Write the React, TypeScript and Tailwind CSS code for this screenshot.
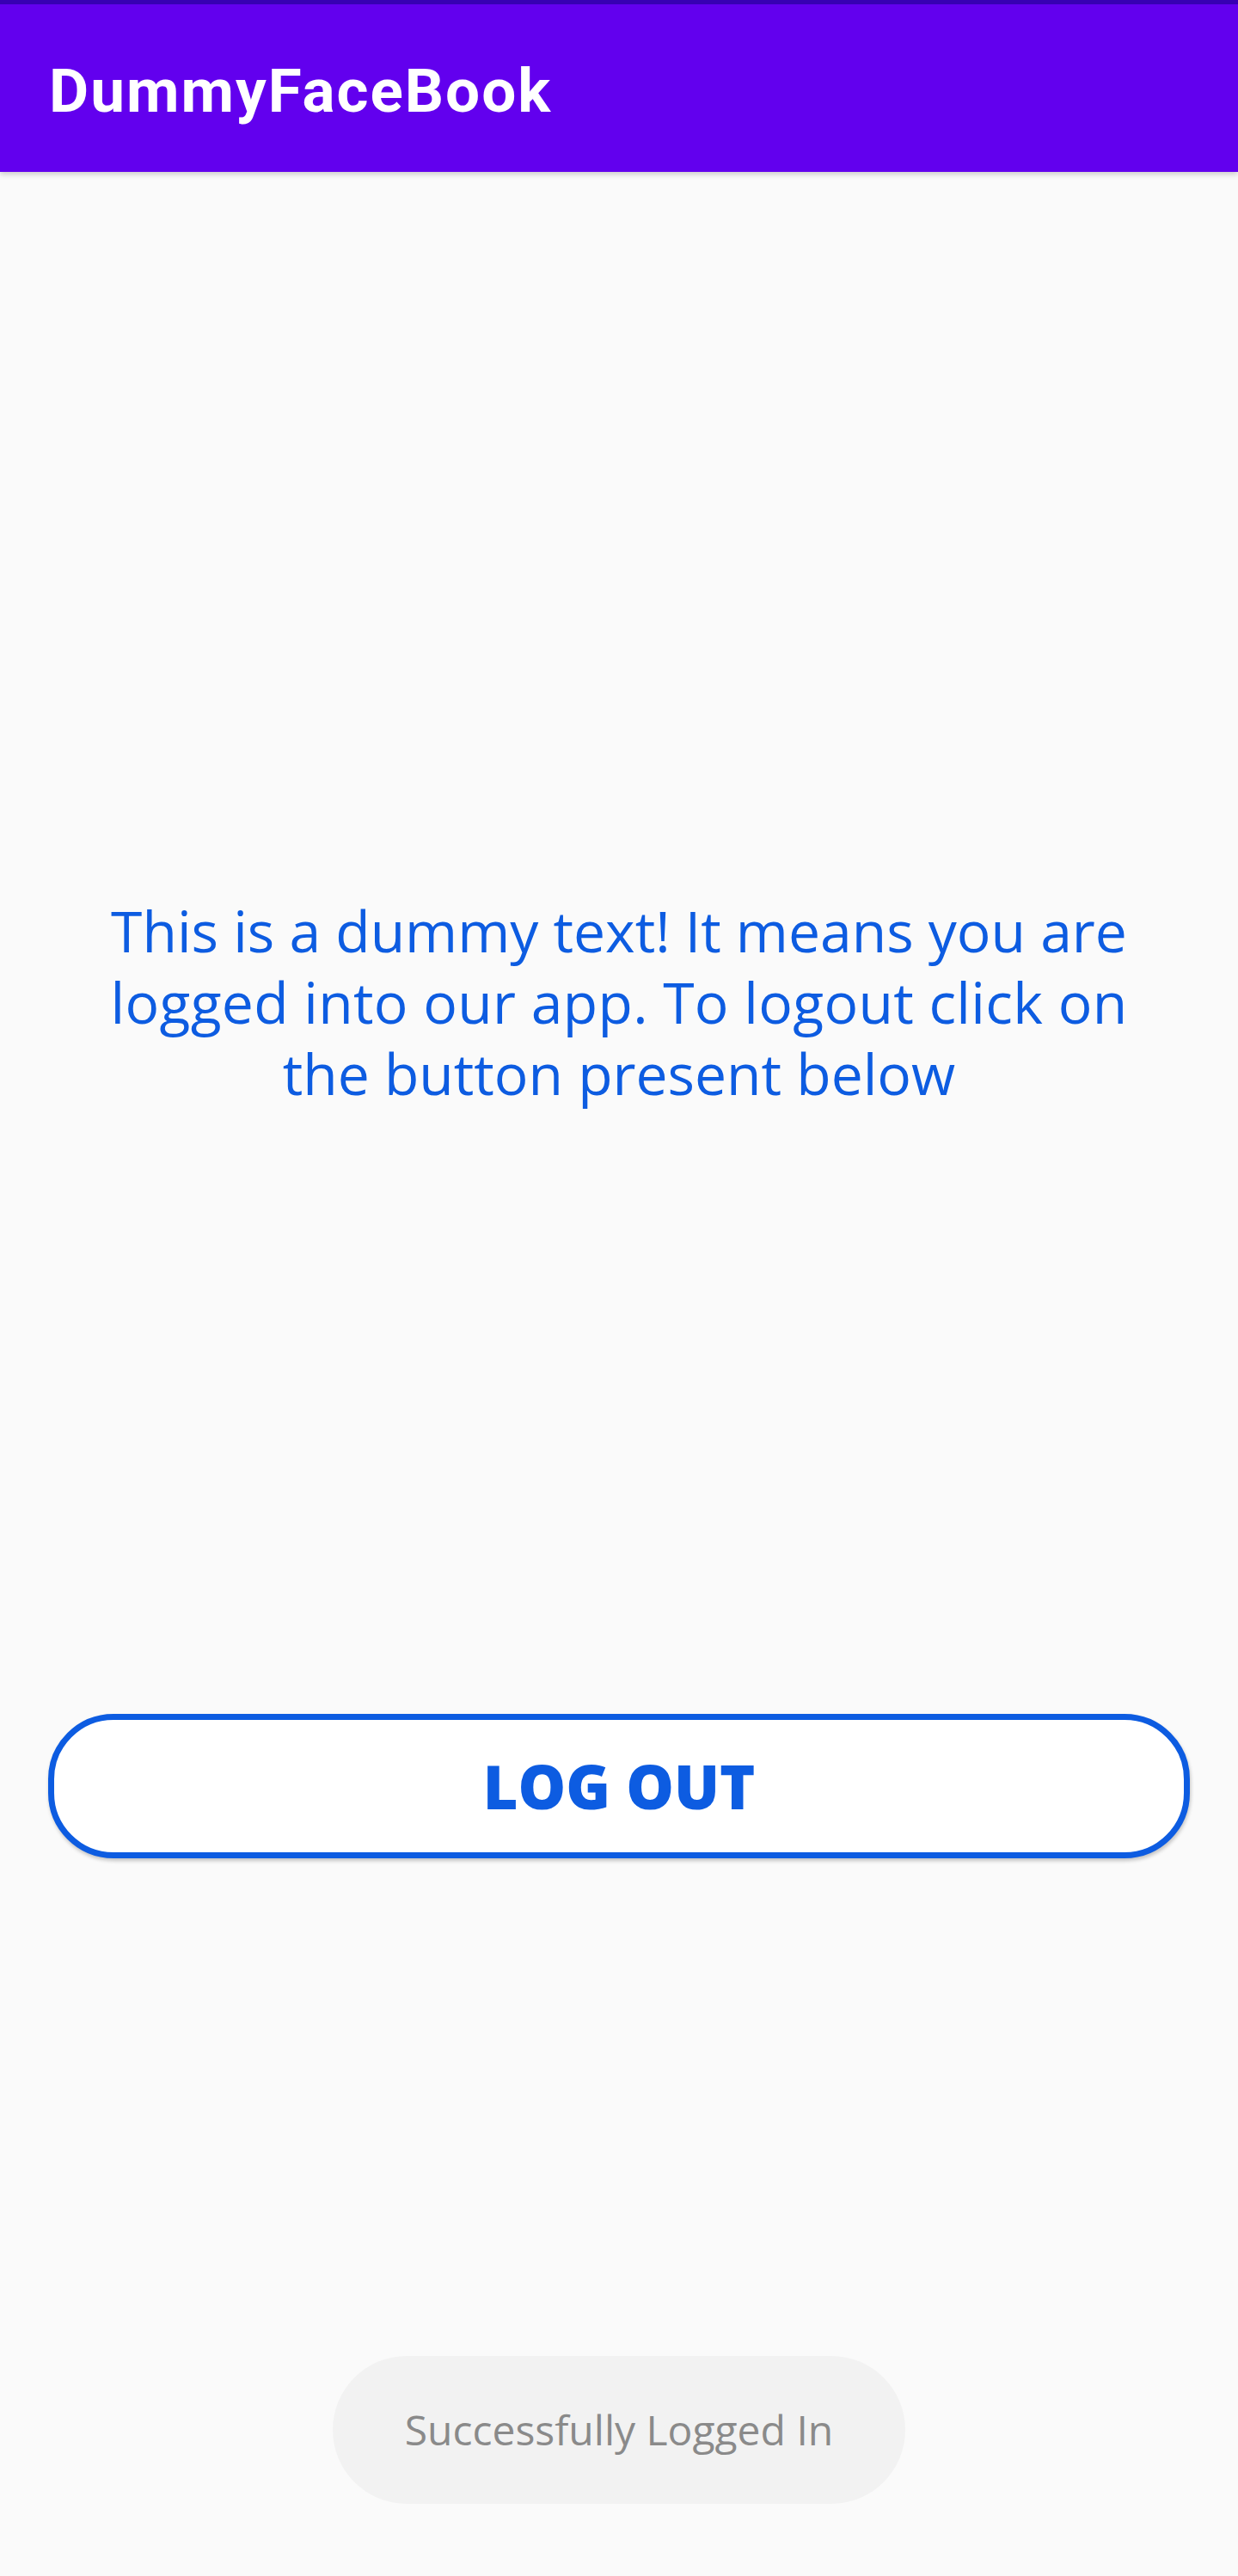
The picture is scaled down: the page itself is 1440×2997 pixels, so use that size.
import React from 'react'

const App = () => {
  return (
    <div className="min-h-screen h-[2997px] flex flex-col bg-[#fafafa] font-['Open_Sans',sans-serif]">
      <header className="h-[200px] shrink-0 flex flex-col bg-[#6200ee] shadow-[0_3px_6px_rgba(0,0,0,0.18)] relative z-10">
        <div className="h-[5px] bg-[#3700b3]" />
        <h1 className="pt-[65px] pl-[57px] text-[71px] leading-none font-bold tracking-[2px] text-white font-['Roboto',sans-serif]">
          DummyFaceBook
        </h1>
      </header>

      <main className="flex-1 flex flex-col items-center">
        <p className="mt-[841px] px-[56px] text-center text-[66px] leading-[83px] text-[#0d5ce1]">
          This is a dummy text! It means you are
          <br />
          <span className="tracking-[0.3px]">logged into our app. To logout click on</span>
          <br />
          the button present below
        </p>

        <button className="mt-[704px] self-stretch mx-[56px] h-[168px] flex items-center justify-center rounded-[76px] border-[7px] border-[#0d5ce1] bg-white shadow-[1px_3px_4px_rgba(0,0,0,0.22)] text-[70px] leading-none font-extrabold text-[#0d5ce1]">
          LOG OUT
        </button>

        <div className="mt-[579px] w-[666px] h-[172px] flex items-center justify-center rounded-full bg-[#f2f2f2] text-[48px] text-[#8a8a8a]">
          Successfully Logged In
        </div>
      </main>
    </div>
  )
}

export default App
